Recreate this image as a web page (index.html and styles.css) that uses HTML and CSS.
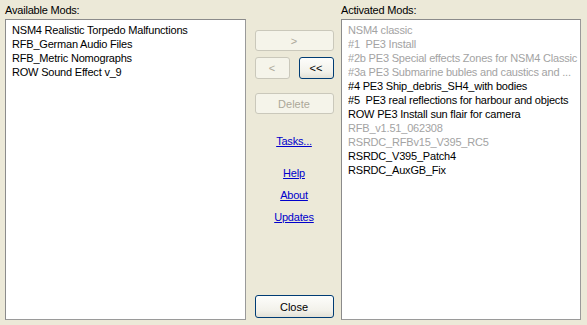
FILE: index.html
```html
<!DOCTYPE html>
<html>
<head>
<meta charset="utf-8">
<link rel="stylesheet" href="styles.css">
</head>
<body>
<div class="dialog">
  <div class="column left">
    <div class="label">Available Mods:</div>
    <div class="listbox">
      <div class="item">NSM4 Realistic Torpedo Malfunctions</div>
      <div class="item">RFB_German Audio Files</div>
      <div class="item">RFB_Metric Nomographs</div>
      <div class="item">ROW Sound Effect v_9</div>
    </div>
  </div>
  <div class="middle">
    <button class="btn wide disabled">&gt;</button>
    <div class="btn-row">
      <button class="btn small disabled">&lt;</button>
      <button class="btn small active">&lt;&lt;</button>
    </div>
    <button class="btn wide disabled delete">Delete</button>
    <a class="link tasks" href="#">Tasks...</a>
    <a class="link help" href="#">Help</a>
    <a class="link" href="#">About</a>
    <a class="link" href="#">Updates</a>
    <div class="spacer"></div>
    <button class="btn wide close">Close</button>
  </div>
  <div class="column right">
    <div class="label">Activated Mods:</div>
    <div class="listbox">
      <div class="item off">NSM4 classic</div>
      <div class="item off">#1&nbsp; PE3 Install</div>
      <div class="item off">#2b PE3 Special effects Zones for NSM4 Classic</div>
      <div class="item off">#3a PE3 Submarine bubles and caustics and ...</div>
      <div class="item">#4 PE3 Ship_debris_SH4_with bodies</div>
      <div class="item">#5&nbsp; PE3 real reflections for harbour and objects</div>
      <div class="item">ROW PE3 Install sun flair for camera</div>
      <div class="item off">RFB_v1.51_062308</div>
      <div class="item off">RSRDC_RFBv15_V395_RC5</div>
      <div class="item">RSRDC_V395_Patch4</div>
      <div class="item">RSRDC_AuxGB_Fix</div>
    </div>
  </div>
</div>
</body>
</html>
```

FILE: styles.css
```css
html, body {
  margin: 0;
  padding: 0;
  background: #ECE9D8;
}
body {
  width: 587px;
  height: 325px;
  overflow: hidden;
  font-family: "Liberation Sans", Arial, sans-serif;
  font-size: 11px;
  letter-spacing: -0.2px;
  color: #000;
}
.dialog {
  display: flex;
  height: 325px;
  box-sizing: border-box;
  padding: 4px 6px 5px 5px;
}
.column {
  display: flex;
  flex-direction: column;
}
.left { width: 241px; }
.right { width: 240px; }
.label {
  height: 15px;
  line-height: 13px;
}
.listbox {
  flex: 1;
  background: #fff;
  border: 1px solid #8b8b8b;
  border-right-color: #9a9a9a;
  border-bottom-color: #9a9a9a;
  padding: 3px 0 0 6px;
  box-sizing: border-box;
}
.item {
  height: 14px;
  line-height: 14px;
  white-space: nowrap;
  overflow: hidden;
}
.item.off { color: #a3a3a3; }
.middle {
  width: 95px;
  display: flex;
  flex-direction: column;
  align-items: center;
  padding-top: 26px;
  padding-left: 1px;
  box-sizing: border-box;
}
.btn {
  font-family: "Liberation Sans", Arial, sans-serif;
  font-size: 11px;
  border-radius: 3px;
  padding: 0;
  margin: 0;
  box-sizing: border-box;
  background: linear-gradient(#fdfdfb, #f2f1ea 70%, #e3e1d6);
}
.btn.disabled {
  color: #aca899;
  border: 1px solid #cac8bb;
  background: #f5f4ea;
}
.btn.wide { width: 79px; height: 21px; }
.btn-row {
  display: flex;
  gap: 9px;
  margin-top: 6px;
}
.btn.small { width: 35px; height: 22px; }
.btn.active {
  border: 1px solid #003c74;
  color: #000;
}
.btn.delete { margin-top: 14px; }
.link {
  color: #0000cc;
  text-decoration: underline;
  line-height: 14px;
  margin-top: 8px;
}
.link.tasks { margin-top: 20px; }
.link.help { margin-top: 18px; }
.spacer { flex: 1; }
.btn.close {
  height: 23px;
  border: 1px solid #003c74;
  color: #000;
  margin-bottom: 2px;
}
```
